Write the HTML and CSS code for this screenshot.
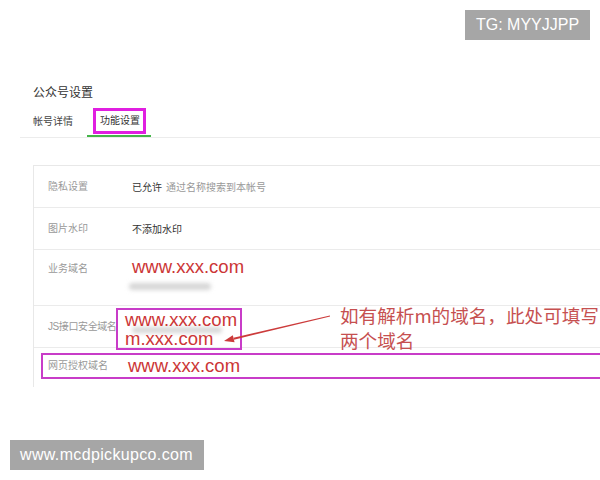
FILE: index.html
```html
<!DOCTYPE html>
<html lang="zh-CN">
<head>
  <meta charset="UTF-8" />
  <title>公众号设置</title>
  <link rel="stylesheet" href="styles.css">
</head>
<body>
  <div class="page">
    <h1 class="title">公众号设置</h1>
    <div class="tabs">
      <div class="tab">帐号详情</div>
      <div class="tab active"><span class="tab-mark">功能设置</span></div>
    </div>

    <div class="panel">
      <div class="row">
        <div class="label">隐私设置</div>
        <div class="value">已允许<span class="hint">通过名称搜索到本帐号</span></div>
      </div>
      <div class="row">
        <div class="label">图片水印</div>
        <div class="value">不添加水印</div>
      </div>
      <div class="row tall">
        <div class="label">业务域名</div>
        <div class="value domains">
          <span class="domain">www.xxx.com</span>
          <span class="blur"></span>
        </div>
      </div>
      <div class="row top">
        <div class="label">JS接口安全域名</div>
        <div class="mark-box">
          <span class="blur inside"></span>
          <span class="domain line">www.xxx.com</span>
          <span class="domain line">m.xxx.com</span>
        </div>
      </div>
      <div class="row last">
        <div class="mark-row">
          <div class="label plain">网页授权域名</div>
          <span class="domain">www.xxx.com</span>
        </div>
      </div>
    </div>

    <div class="note">如有解析m的域名，此处可填写，<br>两个域名</div>
    <svg class="arrow" width="600" height="480" viewBox="0 0 600 480">
      <polygon points="330.1,316.4 329.9,315.6 233.5,337.7 233.9,339.7" fill="#cc3b3b"/>
      <polygon points="224,341 234.6,342.2 232.8,335.2" fill="#cc3b3b"/>
    </svg>

    <div class="badge badge-top">TG: MYYJJPP</div>
    <div class="badge badge-bottom">www.mcdpickupco.com</div>
  </div>
</body>
</html>
```

FILE: styles.css
```css
body {
  margin: 0;
  background: #fff;
  font-family: "Liberation Sans", "Noto Sans CJK SC", sans-serif;
  color: #333;
}
.page {
  position: relative;
  height: 480px;
  overflow: hidden;
  padding: 85px 0 0 20px;
  box-sizing: border-box;
}
.title {
  margin: 0 0 0 13px;
  font-size: 12px;
  line-height: 16px;
  font-weight: normal;
  color: #333;
}
.tabs {
  display: flex;
  align-items: flex-start;
  margin-top: 7px;
  padding-left: 13px;
  border-bottom: 1px solid #ececec;
}
.tab {
  font-size: 10px;
  line-height: 28px;
  height: 28px;
  color: #444;
}
.tab.active {
  height: auto;
  line-height: normal;
  margin-left: 14px;
  padding: 0 5px 0 6px;
  border-bottom: 2px solid #44b549;
}
.tab-mark {
  display: block;
  height: 20px;
  line-height: 20px;
  padding: 0 3px 0 4px;
  margin-bottom: 1px;
  border: 3px solid #e01fe0;
  color: #333;
}
.panel {
  margin: 27px -40px 0 13px;
  border-left: 1px solid #e8e8e8;
  border-top: 1px solid #e8e8e8;
}
.row {
  display: flex;
  align-items: center;
  height: 41px;
  border-bottom: 1px solid #ebebeb;
}
.row.tall {
  height: 55px;
  align-items: flex-start;
}
.row.top {
  align-items: flex-start;
}
.row.last {
  display: block;
  height: auto;
  border-bottom: none;
  padding: 5px 0 8px 7px;
}
.label {
  flex-shrink: 0;
  width: 84px;
  padding-left: 14px;
  font-size: 10px;
  line-height: 14px;
  color: #999;
}
.row.tall .label {
  padding-top: 12px;
}
.row.top .label {
  padding-top: 14px;
  letter-spacing: -0.4px;
}
.label.plain {
  padding-left: 0;
  width: 80px;
}
.value {
  font-size: 10px;
  color: #333;
}
.hint {
  margin-left: 4px;
  color: #999;
}
.domains {
  display: flex;
  flex-direction: column;
  padding-top: 7px;
}
.domain {
  font-size: 18.5px;
  line-height: 20px;
  color: #cc3636;
}
.blur {
  display: block;
  width: 82px;
  height: 7px;
  margin: 6px 0 0 -3px;
  background: #d6d6d6;
  border-radius: 4px;
  filter: blur(2px);
}
.mark-box {
  position: relative;
  margin: 2px 0 0 -16px;
  padding: 0 3px 0 7px;
  border: 2px solid #c83cc8;
}
.domain.line {
  position: relative;
  display: block;
  line-height: 19px;
}
.blur.inside {
  position: absolute;
  left: 14px;
  top: 17px;
  width: 90px;
  height: 6px;
  margin: 0;
}
.mark-row {
  display: flex;
  align-items: center;
  height: 22px;
  padding-left: 5px;
  border: 2px solid #c83cc8;
}
.note {
  position: absolute;
  left: 340px;
  top: 302px;
  font-family: "Noto Sans CJK SC", sans-serif;
  font-size: 18.6px;
  line-height: 25px;
  color: #c65050;
  white-space: nowrap;
}
.arrow {
  position: absolute;
  left: 0;
  top: 0;
  pointer-events: none;
}
.badge {
  position: absolute;
  height: 30px;
  line-height: 30px;
  background: #a6a6a6;
  color: #fff;
  font-size: 16px;
  white-space: nowrap;
}
.badge-top {
  top: 10px;
  right: 10px;
  width: 125px;
  text-align: center;
}
.badge-bottom {
  top: 440px;
  left: 10px;
  width: 184px;
  padding-left: 10px;
  letter-spacing: 0.35px;
}
```
